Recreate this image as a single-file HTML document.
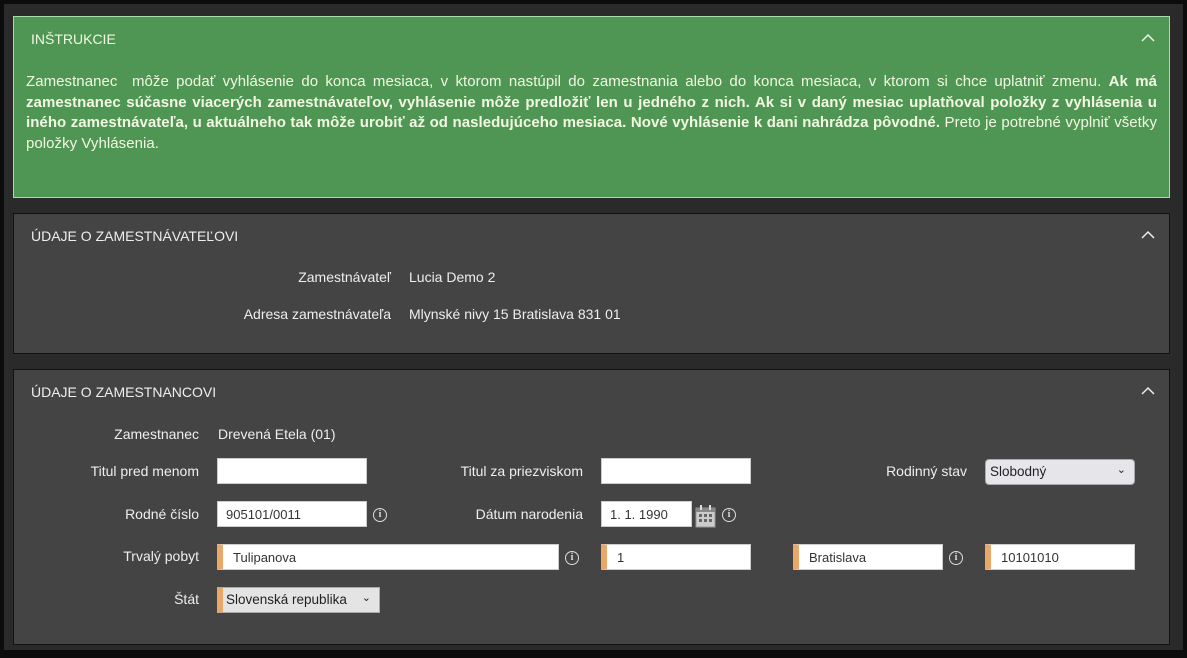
<!DOCTYPE html>
<html><head><meta charset="utf-8"><style>
*{box-sizing:border-box;margin:0;padding:0}
body{width:1187px;height:658px;background:#0c0c0c;font-family:"Liberation Sans",sans-serif;font-size:14px;color:#eee;position:relative;overflow:hidden}
.bg{position:absolute;left:4px;top:4px;width:1179px;height:646px;background:#2a2a2a}
.p{position:absolute;left:13px;width:1157px}
.g{top:16px;height:182px;background:#4f9654;border:1px solid #a6dca8;color:#f2f8e2}
.d{background:#444;border:1px solid #111}
.h{position:absolute;left:17px;font-size:14px}
.chev{position:absolute;right:14px;width:14px;height:9px}
.txt{position:absolute;left:12px;right:12px;top:55px;line-height:20.5px;text-align:justify;font-size:15px;letter-spacing:0.05px}
.a{position:absolute;font-size:14px;white-space:nowrap;color:#eee}
.r{text-align:right}
.in{position:absolute;height:26px;background:#fff;border:1px solid #ccc;color:#333;font-size:13px;padding:6px 8px;line-height:14px}
.o{border-left:6px solid #e8a86a;padding-left:10px}
.i{position:absolute;width:14px;height:14px;border:1.5px solid #ddd;border-radius:50%;color:#ddd;font-size:10px;font-weight:bold;text-align:center;line-height:11px;font-family:"Liberation Serif",serif}
.sel{position:absolute;background:#e6e6ea;border:1px solid #aaa;color:#222;font-size:13.5px;padding:4px 4px}
</style></head><body>
<div class="bg"></div>
<div class="p g">
<div class="h" style="top:14px">INŠTRUKCIE</div>
<svg class="chev" style="top:16px" viewBox="0 0 14 9"><path d="M1 8L7 2L13 8" stroke="#eef8e6" stroke-width="1.5" fill="none"/></svg>
<div class="txt">Zamestnanec&nbsp; môže podať vyhlásenie do konca mesiaca, v ktorom nastúpil do zamestnania alebo do konca mesiaca, v ktorom si chce uplatniť zmenu. <b>Ak má zamestnanec súčasne viacerých zamestnávateľov, vyhlásenie môže predložiť len u jedného z nich. Ak si v daný mesiac uplatňoval položky z vyhlásenia u iného zamestnávateľa, u aktuálneho tak môže urobiť až od nasledujúceho mesiaca. Nové vyhlásenie k dani nahrádza pôvodné.</b> Preto je potrebné vyplniť všetky položky Vyhlásenia.</div>
</div>
<div class="p d" style="top:213px;height:141px">
<div class="h" style="top:14px">ÚDAJE O ZAMESTNÁVATEĽOVI</div>
<svg class="chev" style="top:16px" viewBox="0 0 14 9"><path d="M1 8L7 2L13 8" stroke="#eee" stroke-width="1.5" fill="none"/></svg>
</div>
<div class="a r" style="right:796px;top:269px">Zamestnávateľ</div>
<div class="a" style="left:409px;top:269px">Lucia Demo 2</div>
<div class="a r" style="right:796px;top:306px">Adresa zamestnávateľa</div>
<div class="a" style="left:409px;top:306px">Mlynské nivy 15 Bratislava 831 01</div>
<div class="p d" style="top:369px;height:276px">
<div class="h" style="top:14px">ÚDAJE O ZAMESTNANCOVI</div>
<svg class="chev" style="top:16px" viewBox="0 0 14 9"><path d="M1 8L7 2L13 8" stroke="#eee" stroke-width="1.5" fill="none"/></svg>
</div>
<div class="a r" style="right:988px;top:426px">Zamestnanec</div>
<div class="a" style="left:218px;top:426px">Drevená Etela (01)</div>
<div class="a r" style="right:988px;top:463px">Titul pred menom</div>
<div class="in" style="left:217px;top:458px;width:150px"></div>
<div class="a r" style="right:604px;top:463px">Titul za priezviskom</div>
<div class="in" style="left:601px;top:458px;width:150px"></div>
<div class="a r" style="right:220px;top:463px">Rodinný stav</div>
<div class="sel" style="left:985px;top:459px;width:150px;height:26px;border-radius:4px">Slobodný<span style="position:absolute;right:8px;top:3px;font-size:11px">&#8964;</span></div>
<div class="a r" style="right:988px;top:506px">Rodné číslo</div>
<div class="in" style="left:217px;top:501px;width:150px">905101/0011</div>
<div class="i" style="left:373px;top:508px">i</div>
<div class="a r" style="right:604px;top:506px">Dátum narodenia</div>
<div class="in" style="left:601px;top:501px;width:91px">1. 1. 1990</div>
<svg style="position:absolute;left:695px;top:505px" width="22" height="23" viewBox="0 0 22 23"><rect x="1" y="3" width="19" height="19" fill="#ccc" stroke="#999"/><rect x="1" y="3" width="19" height="4" fill="#888"/><g fill="#666"><rect x="4" y="9" width="3" height="3"/><rect x="9" y="9" width="3" height="3"/><rect x="14" y="9" width="3" height="3"/><rect x="4" y="14" width="3" height="3"/><rect x="9" y="14" width="3" height="3"/><rect x="14" y="14" width="3" height="3"/></g><rect x="5" y="0" width="2" height="5" fill="#ddd"/><rect x="14" y="0" width="2" height="5" fill="#ddd"/></svg>
<div class="i" style="left:722px;top:508px">i</div>
<div class="a r" style="right:988px;top:548px">Trvalý pobyt</div>
<div class="in o" style="left:217px;top:544px;width:342px">Tulipanova</div>
<div class="i" style="left:565px;top:551px">i</div>
<div class="in o" style="left:601px;top:544px;width:150px">1</div>
<div class="in o" style="left:793px;top:544px;width:150px">Bratislava</div>
<div class="i" style="left:949px;top:551px">i</div>
<div class="in o" style="left:985px;top:544px;width:150px">10101010</div>
<div class="a r" style="right:988px;top:591px">Štát</div>
<div class="sel" style="left:217px;top:587px;width:163px;height:26px;border-left:6px solid #e8a86a;background:#e4e4e4;padding-left:3px">Slovenská republika<span style="position:absolute;right:8px;top:3px;font-size:11px">&#8964;</span></div>
</body></html>
